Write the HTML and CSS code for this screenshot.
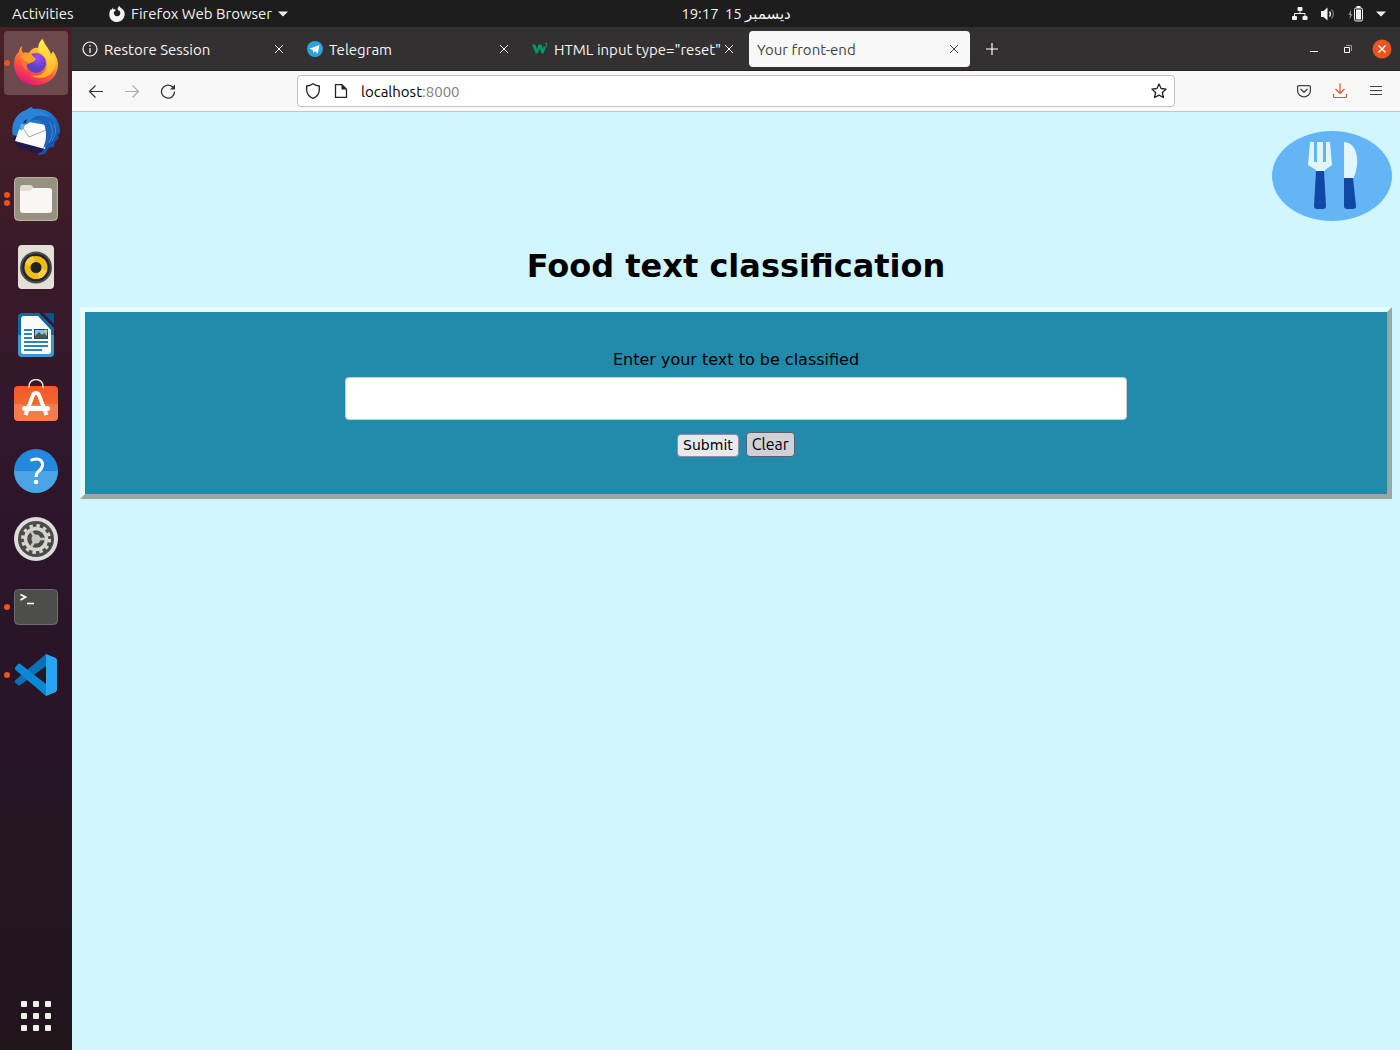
FILE: index.html
```html
<!DOCTYPE html>
<html lang="en">
<head>
<meta charset="utf-8">
<meta name="viewport" content="width=device-width, initial-scale=1">
<title>Your front-end</title>
<link rel="stylesheet" href="styles.css">
</head>
<body class="desktop">
<header class="topbar">
  <button class="topbar-btn activities" type="button">Activities</button>
  <button class="topbar-btn app-menu" type="button">
    <svg width="16" height="16" viewBox="0 0 16 16"><path fill="#f2f2f2" d="M4.200 1.200C4 2 4.100 2.700 4.400 3.200L6.800 3.400 6.200 5 4.800 6C4.500 8.400 6 10.300 8 10.300c2.200 0 3.500-1.600 3.300-3.500C11.200 5.400 10.300 4.600 8.800 4 8.300 2.300 9 .8 10.600 0c.3 1.200 1 1.700 2.200 2.500C14.800 4 15.800 6 15.700 8.300 15.500 12.700 12.200 16 8 16 3.500 16 .3 12.700.3 8.400c0-2.300.7-4.200 1.800-5.400l.4 1z"/></svg>
    <span>Firefox Web Browser</span>
    <svg width="10" height="6" viewBox="0 0 10 6"><path fill="#f2f2f2" d="M0 .5h10L5 5.500z"/></svg>
  </button>
  <button class="topbar-btn clock" type="button"><span>19:17</span><span>15 <span lang="ar">ديسمبر</span></span></button>
  <button class="topbar-btn status" type="button" aria-label="System">
    <svg width="16" height="16" viewBox="0 0 16 16"><g fill="#f2f2f2"><rect x="5.500" y="1" width="5" height="4" rx="1"/><rect x="0" y="10" width="5" height="4" rx="1"/><rect x="10.500" y="10" width="5" height="4" rx="1"/></g><path d="M8 5v2.500M2.500 10V7.500h10.500V10" fill="none" stroke="#f2f2f2"/></svg>
    <svg width="16" height="16" viewBox="0 0 16 16"><path fill="#f2f2f2" d="M1 5h2.500L7.500 1.500v13L3.500 11H1z"/><path d="M9.500 5.500q2 2.500 0 5" fill="none" stroke="#f2f2f2" stroke-width="1.300"/><path d="M11.500 3.500q4 4.500 0 9" fill="none" stroke="#777" stroke-width="1.300"/></svg>
    <svg width="16" height="16" viewBox="0 0 16 16"><path fill="#888" d="M3 3.500L.5 9H2l-.5 4.500L4.500 8H3z"/><rect x="6.500" y="2" width="8" height="13" rx="1.500" fill="none" stroke="#f2f2f2"/><path fill="#f2f2f2" d="M8.500 0h4v2h-4zM8 3.500h5v10H8z"/></svg>
    <svg width="10" height="6" viewBox="0 0 10 6"><path fill="#f2f2f2" d="M0 .5h10L5 5.500z"/></svg>
  </button>
</header>

<nav class="dock" aria-label="Applications">
  <button class="app app-active running" type="button" aria-label="Firefox">
    <svg width="48" height="48" viewBox="0 0 48 48">
      <defs>
        <linearGradient id="fx" x1=".8" y1="0" x2=".3" y2="1"><stop offset="0" stop-color="#fff44f"/><stop offset=".35" stop-color="#ffb52a"/><stop offset=".65" stop-color="#ff5a36"/><stop offset="1" stop-color="#e5127c"/></linearGradient>
        <radialGradient id="fxg" cx=".6" cy=".25"><stop offset="0" stop-color="#a34bff"/><stop offset="1" stop-color="#5a42c8"/></radialGradient>
        <linearGradient id="fxt" x1="0" y1="0" x2="0" y2="1"><stop offset="0" stop-color="#fff04d"/><stop offset="1" stop-color="#ffad25"/></linearGradient>
      </defs>
      <path fill="url(#fx)" d="M10 7c-1 3 0 5 1 7 2-1 4-1 6 0 2-5 7-6 11-5 0-4 1-7 3-9 1 5 4 7 6 11 1 1 2 3 2 5l2-4c3 5 5 9 5 13 0 12-9 21-22 21S2 37 2 25c0-6 2-10 5-12 0-3 1-4 3-6z"/>
      <path fill="url(#fxt)" d="M30 0c-4 5-5 9-2 14 4 3 7 5 7 11 0 9-8 14-17 11 14 8 28-2 25-16l-3-6-2 4C38 10 32 8 30 0z"/>
      <circle cx="24" cy="24" r="10" fill="url(#fxg)"/>
      <path fill="#ffa02b" d="M8 18c3-3 7-4 11-3l5 5c-1 3-5 3-7 5-3-2-6-5-9-7z"/>
      <path fill="#ff7139" d="M8 19c3 2 6 4 9 5-3 1-3 5-1 8-4-2-7-7-8-13z"/>
    </svg>
  </button>
  <button class="app" type="button" aria-label="Thunderbird">
    <svg width="48" height="48" viewBox="0 0 48 48">
      <defs><linearGradient id="tb" x1="0" y1="0" x2="1" y2="1"><stop offset="0" stop-color="#2c8ee0"/><stop offset=".5" stop-color="#2373cd"/><stop offset="1" stop-color="#163e91"/></linearGradient></defs>
      <path fill="url(#tb)" d="M1 30C-2 16 5 6 14 3l5-3 3 2c15-2 27 10 26 24l-2 2 1 3-4 4-1 5-5 1-4 6-7 1 4-8z"/>
      <path fill="#221a49" d="M1 28c1 8 5 13 9 15l3-1c6 4 12 5 17 3l4-7z"/>
      <path fill="#fbfbfc" d="M3 34l6-17 8-2 17 3 1 10-2 14z"/>
      <path d="M9 18l8 12 17-7" fill="none" stroke="#a5a5ae"/>
      <path fill="#1c63ba" d="M16 15c7-4 16-2 17 5 2 8 1 15-2 21 10-5 16-20 8-29C33 4 20 7 16 15z"/>
      <path fill="#2b83d8" d="M2 19C3 10 9 5 16 3c8-1 17 1 22 8-8-4-18-3-21 5l-4 2-3 5-3-1z"/>
      <path fill="#5ab4ec" d="M8 19c1-2 3-3 5-3l-1 4-3 4z"/><path fill="#123773" d="M12 14l3-2-1 4-3 1z"/>
      <path d="M37 14q7 10 0 22M42 17q4 8-2 17" fill="none" stroke="#3c8cd4"/>
    </svg>
  </button>
  <button class="app running running-two" type="button" aria-label="Files">
    <svg width="48" height="48" viewBox="0 0 48 48"><rect x="2.500" y="2.500" width="43" height="43" rx="4" fill="#979180" stroke="#bbb5a3"/><path fill="#e0dccf" d="M8 15v-2q0-3 3-3h7q2 0 3 2l1 2h15q3 0 3 3v4H8z"/><path fill="#f8f7f4" d="M8 17q0-1 1-1h9l3-3h16q3 0 3 3v19q0 3-3 3H11q-3 0-3-3z"/></svg>
  </button>
  <button class="app" type="button" aria-label="Rhythmbox">
    <svg width="48" height="48" viewBox="0 0 48 48"><rect x="6" y="2" width="36" height="44" rx="4" fill="#e4e0d5"/><circle cx="24" cy="24.500" r="16" fill="#4a4c58"/><circle cx="24" cy="24.500" r="14" fill="#24262a"/><circle cx="24" cy="24.500" r="11.500" fill="#edbd0f"/><path fill="#f8d040" d="M24 24.500L13 21a11 11 0 0 1 8-8zM24 24.500l11 3a11 11 0 0 1-8 8z"/><circle cx="24" cy="24.500" r="5.500" fill="#222"/></svg>
  </button>
  <button class="app" type="button" aria-label="LibreOffice Writer">
    <svg width="48" height="48" viewBox="0 0 48 48"><path fill="#0b6ba5" d="M10 2h17l15 15v25q0 4-4 4H10q-4 0-4-4V6q0-4 4-4z"/><path fill="#3c99ce" d="M6 24h36v18q0 4-4 4H10q-4 0-4-4z"/><path fill="#fafafa" d="M12 5h14l13 14v21q0 3-3 3H12q-3 0-3-3V8q0-3 3-3z"/><path fill="#075687" d="M31 2h9q2 0 2 2v9z"/><path d="M12 19h8m-8 4h8m-8 4h8m-8 4h24m-24 4h24m-24 4h18" stroke="#2c83b7" stroke-width="2"/><path fill="#114e77" d="M22 18h14v10H22z"/><path fill="#7fc4ee" d="M23 19h12v8H23z"/><path fill="#545445" d="M23 27v-2l4-4 3 3 2-2 3 3v2z"/><circle cx="34" cy="20" r="1.500" fill="#f5ca24"/></svg>
  </button>
  <button class="app" type="button" aria-label="Ubuntu Software">
    <svg width="48" height="48" viewBox="0 0 48 48"><defs><linearGradient id="sw" x1="0" y1="0" x2="0" y2="1"><stop offset="0" stop-color="#f15a24"/><stop offset=".5" stop-color="#f36631"/><stop offset=".51" stop-color="#f57a4b"/><stop offset="1" stop-color="#f47d4b"/></linearGradient></defs><rect x="2" y="7" width="44" height="35" rx="4" fill="url(#sw)"/><path d="M17 9V7a7 6.500 0 0 1 14 0v2" fill="none" stroke="#eee2bd" stroke-width="1.500"/><path d="M13.500 36l7.500-20q1-2 3-2t3 2l7.500 20" fill="none" stroke="#fff" stroke-width="4"/><rect x="10" y="27" width="28" height="5" rx="2.500" fill="#fff"/></svg>
  </button>
  <button class="app" type="button" aria-label="Help">
    <svg width="48" height="48" viewBox="0 0 48 48"><circle cx="24" cy="24" r="22" fill="#2489dc"/><path fill="#4aa4e5" d="M2 24a22 22 0 0 0 44 0z"/><path d="M18.500 13.500q3-1.500 6-1.500 6 0 6 6 0 3-3.500 6-3 2-3 6" fill="none" stroke="#fff" stroke-width="3"/><circle cx="24" cy="35" r="2.300" fill="#fff"/></svg>
  </button>
  <button class="app" type="button" aria-label="Settings">
    <svg width="48" height="48" viewBox="0 0 48 48"><circle cx="24" cy="24" r="22" fill="#deddda"/><circle cx="24" cy="24" r="18" fill="#4b4b49"/><circle cx="24" cy="24" r="13.500" fill="none" stroke="#d7d5d0" stroke-width="3" stroke-dasharray="3.500 3.570"/><circle cx="24" cy="24" r="10.500" fill="none" stroke="#d7d5d0" stroke-width="3.500"/><circle cx="24" cy="24" r="4.500" fill="#c7c6c2"/><path d="M24 24h9M24 24l-5-8M24 24l-5 8" stroke="#c7c6c2" stroke-width="2.500"/></svg>
  </button>
  <button class="app running" type="button" aria-label="Terminal">
    <svg width="48" height="48" viewBox="0 0 48 48"><rect x="2.500" y="6.500" width="43" height="35" rx="4" fill="#4d4d4c" stroke="#6d6d6b"/><path d="M8.500 11.500l5 2.500-5 3" fill="none" stroke="#fff" stroke-width="1.800"/><path d="M15 20.500h7" stroke="#fff" stroke-width="1.600"/></svg>
  </button>
  <button class="app running" type="button" aria-label="Visual Studio Code">
    <svg width="48" height="48" viewBox="0 0 48 48"><path fill="#0b70b8" d="M3.500 32q-1.500-1 0-3L34 3v12L9 33.500q-1.500 1.500-3 .5z"/><path fill="#0b87d5" d="M3.500 16q-1.500 1 0 3L34 45V33L9 13.500q-1.500-1.500-3-.5z"/><path fill="#28a4f3" d="M34 3l10 4 1 2v30l-1 2-10 4z"/></svg>
  </button>
  <button class="app show-apps" type="button" aria-label="Show Applications">
    <svg width="32" height="32" viewBox="0 0 32 32"><g fill="#efefea"><rect x="1" y="1" width="6" height="6" rx="1"/><rect x="13" y="1" width="6" height="6" rx="1"/><rect x="25" y="1" width="6" height="6" rx="1"/><rect x="1" y="13" width="6" height="6" rx="1"/><rect x="13" y="13" width="6" height="6" rx="1"/><rect x="25" y="13" width="6" height="6" rx="1"/><rect x="1" y="25" width="6" height="6" rx="1"/><rect x="13" y="25" width="6" height="6" rx="1"/><rect x="25" y="25" width="6" height="6" rx="1"/></g></svg>
  </button>
</nav>

<div class="browser">
  <div class="tabs">
    <div class="tab">
      <svg width="16" height="16" viewBox="0 0 16 16"><circle cx="8" cy="8" r="7" fill="none" stroke="#f5f5f5" stroke-width="1.200"/><path d="M8 7v5M8 4v1.500" stroke="#f5f5f5" stroke-width="1.300"/></svg>
      <span class="tab-title">Restore Session</span>
      <button class="tab-close" type="button" aria-label="Close tab"><svg width="16" height="16" viewBox="0 0 16 16"><path d="M4 4l8 8M12 4l-8 8" stroke="currentColor"/></svg></button>
    </div>
    <div class="tab">
      <svg width="16" height="16" viewBox="0 0 16 16"><circle cx="8" cy="8" r="8" fill="#2ca3dd"/><path fill="#fff" d="M2.500 7.800L12.500 4l-1.700 8.500-3-2.200-1.500 1.500-.5-2.800z"/><path d="M6 9l4.500-3-3.500 4" fill="#b8dcf0"/></svg>
      <span class="tab-title">Telegram</span>
      <button class="tab-close" type="button" aria-label="Close tab"><svg width="16" height="16" viewBox="0 0 16 16"><path d="M4 4l8 8M12 4l-8 8" stroke="currentColor"/></svg></button>
    </div>
    <div class="tab">
      <svg width="16" height="16" viewBox="0 0 16 16"><path fill="#059862" d="M0 3.500h3.300L5 8l1.500-4.500h3L11 8l.8-3.500 1.700 2.500-2 5.500H9.800L7.500 7.800 5.500 12.500H3.800z"/><path d="M13 2.500h2l-1 1.500q2 1 0 2h-1" fill="none" stroke="#059862"/></svg>
      <span class="tab-title">HTML input type="reset"</span>
      <button class="tab-close" type="button" aria-label="Close tab"><svg width="16" height="16" viewBox="0 0 16 16"><path d="M4 4l8 8M12 4l-8 8" stroke="currentColor"/></svg></button>
    </div>
    <div class="tab tab-current">
      <span class="tab-title">Your front-end</span>
      <button class="tab-close" type="button" aria-label="Close tab"><svg width="16" height="16" viewBox="0 0 16 16"><path d="M4 4l8 8M12 4l-8 8" stroke="currentColor"/></svg></button>
    </div>
    <button class="new-tab" type="button" aria-label="New tab"><svg width="16" height="16" viewBox="0 0 16 16"><path d="M8 2v12M2 8h12" stroke="#fff" stroke-width="1.200"/></svg></button>
    <div class="window-controls">
      <button type="button" aria-label="Minimize"><svg width="20" height="20" viewBox="0 0 20 20"><path d="M6 12.500h8" stroke="#fff"/></svg></button>
      <button type="button" aria-label="Restore"><svg width="20" height="20" viewBox="0 0 20 20"><path d="M6.500 8.500h5v5h-5z" fill="none" stroke="#fff"/><path d="M8 6.500h5.500V12" fill="none" stroke="#999"/></svg></button>
      <button type="button" aria-label="Close"><svg width="20" height="20" viewBox="0 0 20 20"><circle cx="10" cy="10" r="9.500" fill="#e95420"/><path d="M6.500 6.500l7 7m0-7l-7 7" stroke="#fff" stroke-width="1.400"/></svg></button>
    </div>
  </div>

  <div class="toolbar">
    <div class="tools">
      <button type="button" aria-label="Back"><svg width="16" height="16" viewBox="0 0 16 16"><path d="M15 8.500H1.500M7.500 2.500l-6 6 6 6" fill="none" stroke="#333" stroke-width="1.200"/></svg></button>
      <button type="button" aria-label="Forward" disabled><svg width="16" height="16" viewBox="0 0 16 16"><path d="M1 8.500h13.500M8.500 2.500l6 6-6 6" fill="none" stroke="#aaa" stroke-width="1.200"/></svg></button>
      <button type="button" aria-label="Reload"><svg width="16" height="16" viewBox="0 0 16 16"><path d="M14.500 8.500A6.500 6.500 0 1 1 12 3.500L14 5.500" fill="none" stroke="#333" stroke-width="1.300"/><path d="M15 1.500v5H10z" fill="#333"/></svg></button>
    </div>
    <div class="address">
      <svg width="16" height="16" viewBox="0 0 16 16"><path d="M8 .7q3 2 6.300 2.300v4.500q-.5 5.500-6.300 7.800Q2.200 13 1.700 7.500V3Q5 2.700 8 .7z" fill="none" stroke="#222" stroke-width="1.300"/></svg>
      <svg width="16" height="16" viewBox="0 0 16 16"><path d="M2.500 1.600h6.500l4.500 4.500v8.300h-11z" fill="none" stroke="#222" stroke-width="1.300" stroke-linejoin="round"/><path d="M8.500 1.500v5h5z" fill="#222"/></svg>
      <span class="url">localhost<span class="port">:8000</span></span>
      <button type="button" aria-label="Bookmark this page"><svg width="16" height="16" viewBox="0 0 16 16"><path d="M8 1l2.100 4.500 5 .6-3.700 3.400 1 5L8 12.100 3.600 14.500l1-5L.9 6.100l5-.6z" fill="none" stroke="#222" stroke-width="1.300" stroke-linejoin="round"/></svg></button>
    </div>
    <div class="tools tools-end">
      <button type="button" aria-label="Save to Pocket"><svg width="16" height="16" viewBox="0 0 16 16"><path d="M3 2.600h10q1.400 0 1.400 1.400v3.500a6.400 6.400 0 0 1-12.800 0V4q0-1.400 1.400-1.400zM4.500 6L8 9.300 11.500 6" fill="none" stroke="#444" stroke-width="1.300"/></svg></button>
      <button type="button" aria-label="Downloads"><svg width="16" height="16" viewBox="0 0 16 16"><path d="M8 .5v10M3.500 6L8 10.500 12.500 6M1.500 11v2.500q0 1 1 1h11q1 0 1-1V11" fill="none" stroke="#e95420" stroke-width="1.200"/></svg></button>
      <button type="button" aria-label="Menu"><svg width="16" height="16" viewBox="0 0 16 16"><path d="M2 3.500h12M2 7.500h12M2 11.500h12" stroke="#444" stroke-width="1.200"/></svg></button>
    </div>
  </div>

  <main class="page">
    <svg class="logo" width="120" height="90" viewBox="0 0 120 90" role="img" aria-label="Fork and knife">
      <ellipse cx="60" cy="45" rx="60" ry="45" fill="#64b5f6"/>
      <path fill="#e1f5fa" d="M38 11h4v20h3V11h6v20h3V11h4l2 23-7 5v1h-9v-1l-8-5z"/>
      <path fill="#1048a5" d="M44 40h8l2 35q0 3-3 3h-6q-3 0-3-3z"/>
      <path fill="#e1f5fa" d="M72 11c15 1 16 23 9 37h-9z"/>
      <path fill="#1048a5" d="M72 47h9l3 28q0 3-3 3h-6q-3 0-3-3z"/>
    </svg>
    <h1>Food text classification</h1>
    <form class="classify">
      <label for="food-text">Enter your text to be classified</label>
      <input id="food-text" class="food-text" type="text">
      <div class="actions">
        <button class="submit" type="submit">Submit</button>
        <button class="clear" type="reset">Clear</button>
      </div>
    </form>
  </main>
</div>
</body>
</html>
```
FILE: styles.css
```css
* {
  box-sizing: border-box;
}

.desktop {
  margin: 0;
  min-height: 100vh;
  display: grid;
  grid-template: 27px 1fr / 72px minmax(0, 1fr);
  font: 15px/20px Ubuntu, "Noto Sans", "DejaVu Sans", sans-serif;
}

button {
  font: inherit;
  color: inherit;
  padding: 0;
  border: 0;
  background: none;
}

svg {
  display: block;
  flex: none;
}

/* System bar */
.topbar {
  grid-column: 1 / -1;
  display: grid;
  grid-template-columns: 72px 1fr auto 1fr;
  align-items: center;
  background: #1d1d1d;
  color: #f2f2f2;
}

.topbar-btn {
  display: flex;
  align-items: center;
  gap: 6px;
  white-space: nowrap;
}

.activities {
  padding-left: 12px;
}

.app-menu {
  padding-left: 37px;
}

.status {
  justify-content: flex-end;
  gap: 12px;
  padding-right: 14px;
}

/* Dock */
.dock {
  display: flex;
  flex-direction: column;
  align-items: center;
  gap: 4px;
  padding: 4px 4px 2px;
  background: linear-gradient(#4a1f25, #3a1a2a 22%, #2c152b 50%, #20151d);
}

.app {
  position: relative;
  display: grid;
  place-items: center;
  width: 64px;
  height: 64px;
  border-radius: 4px;
}

.app-active {
  background: #6b494d;
}

.running::before,
.running-two::after {
  content: "";
  position: absolute;
  left: 0;
  top: 29px;
  width: 6px;
  height: 6px;
  border-radius: 50%;
  background: #e95420;
}

.running-two::before {
  top: 25px;
}

.running-two::after {
  top: 33px;
}

.show-apps {
  margin-top: auto;
}

/* Browser window */
.browser {
  display: flex;
  flex-direction: column;
}

.tabs {
  display: flex;
  align-items: center;
  gap: 4px;
  height: 44px;
  padding: 0 8px 0 2px;
  background: #323031;
  border-bottom: 1px solid #1f1d1e;
  color: #f5f5f5;
}

.tab {
  display: flex;
  align-items: center;
  gap: 6px;
  flex: 0 1 221px;
  min-width: 0;
  height: 36px;
  padding: 0 8px;
  border-radius: 4px;
}

.tab-current {
  background: #f8f8f8;
  color: #444;
}

.tab-title {
  flex: 1;
  min-width: 0;
  padding-top: 2px;
  overflow: hidden;
  white-space: nowrap;
}

.tab-close {
  margin-left: -8px;
}

.new-tab {
  padding: 10px;
}

.window-controls {
  display: flex;
  gap: 14px;
  margin-left: auto;
}

.toolbar {
  display: grid;
  grid-template-columns: 1fr minmax(0, 878px) 1fr;
  align-items: center;
  height: 41px;
  padding: 0 6px;
  background: #f8f8f8;
  border-bottom: 1px solid #c4c4c4;
}

.tools {
  display: flex;
}

.tools button {
  padding: 8px 10px;
}

.tools-end {
  justify-content: flex-end;
}

.address {
  display: flex;
  align-items: center;
  gap: 12px;
  height: 32px;
  padding: 0 7px;
  background: #fff;
  border: 1px solid #bfbfbf;
  border-radius: 4px;
}

.url {
  flex: 1;
  padding-top: 2px;
  color: #000;
}

.port {
  color: #808080;
}

/* Web page */
.page {
  flex: 1;
  padding: 19px 8px 8px;
  background: #d0f6fc;
  color: #000;
  font: 16px/20px "DejaVu Sans", sans-serif;
}

.logo {
  margin-left: auto;
}

.page h1 {
  margin: 26px 0 22px;
  font-size: 32px;
  line-height: 38px;
  text-align: center;
}

.classify {
  display: flex;
  flex-direction: column;
  align-items: center;
  padding: 38px 0 37px;
  background: #228aab;
  border: 5px solid;
  border-color: #e8fbfb #9ea6a5 #9ea6a5 #e8fbfb;
}

.food-text {
  width: 60%;
  height: 43px;
  margin: 7px 0 12px;
  padding: 0 12px;
  background: #fff;
  border: 1px solid #ccc;
  border-radius: 4px;
  font: inherit;
}

.actions {
  display: flex;
  align-items: flex-end;
  gap: 7px;
}

.submit {
  padding: 0 5px;
  background: #e9e9ed;
  border: 1px solid #8f8f9d;
  border-radius: 4px;
  font-size: 14px;
  line-height: 21px;
}

.clear {
  padding: 0 5px;
  background: #d0d0d7;
  border: 1px solid #5f5f6b;
  border-radius: 4px;
  font-family: Ubuntu, "Noto Sans", sans-serif;
  font-size: 16px;
  line-height: 23px;
}
```
